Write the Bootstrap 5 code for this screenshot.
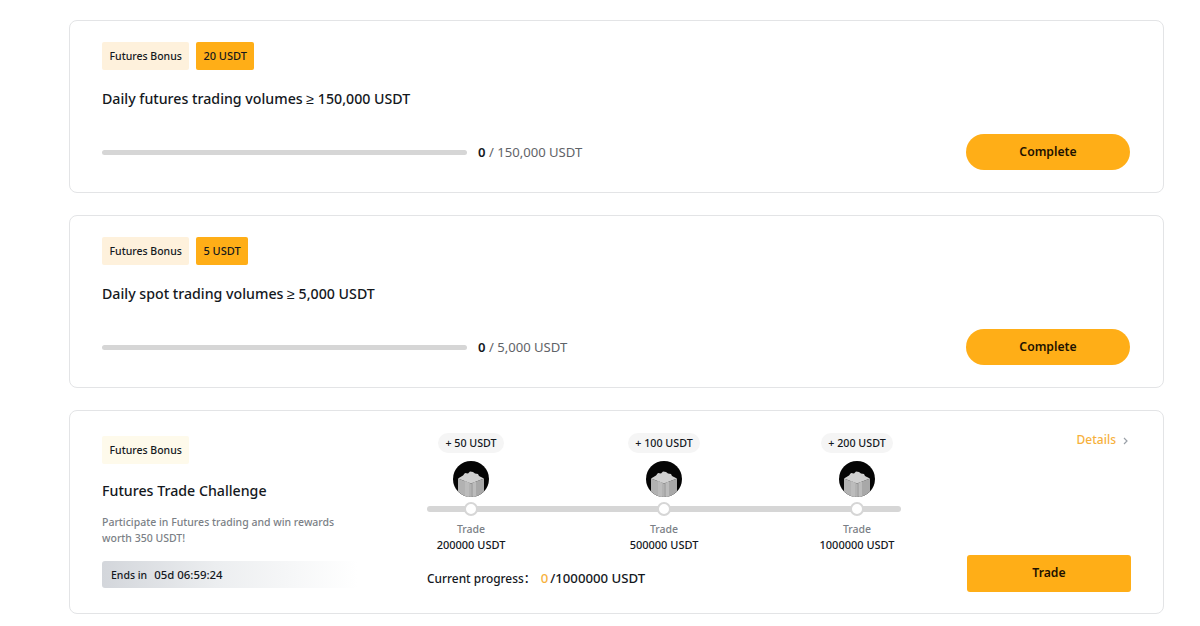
<!DOCTYPE html>
<html lang="en">
<head>
  <meta charset="UTF-8">
  <title>Futures Bonus Tasks</title>
  <link href="https://cdn.jsdelivr.net/npm/bootstrap@5.3.0/dist/css/bootstrap.min.css" rel="stylesheet">
  <style>
    html, body { height: 626px; overflow: hidden; }
    body {
      font-family: "Noto Sans", "Liberation Sans", sans-serif;
      background: #fff;
      color: #14181d;
      padding: 20px 36px 0 69px;
    }
    .task-card {
      height: 173px;
      margin-bottom: 22px;
      padding: 21px 33px 21px 32px;
      border: 1px solid #e3e4e6;
      border-radius: 8px;
    }
    .task-card.challenge { height: 204px; margin-bottom: 0; padding: 22px 32px 21px 32px; }
    .tags { column-gap: 7px; }
    .tag {
      height: 28px;
      padding: 0 7.5px;
      font-size: 10.5px;
      font-weight: 500;
      line-height: 28px;
      border-radius: 2px;
      color: #14181d;
    }
    .tag-light { background: #fef1dc; }
    .tag-pale { background: #fefaeb; }
    .tag-amount { background: #ffae17; font-size: 11px; padding: 0 7px; }
    .task-title { font-size: 14.2px; font-weight: 500; line-height: 20px; margin: 19px 0 0; }
    .bar { width: 365px; height: 5px; background: #d6d6d6; border-radius: 3px; }
    .amount { font-size: 13.1px; color: #5f6368; margin-left: 11px; line-height: 20px; }
    .amount b { color: #14181d; font-weight: 600; }
    .btn-pill, .btn-trade {
      width: 164px;
      font-size: 12.2px;
      font-weight: 600;
      background: #ffae17;
      color: #1e1200;
      border: 0;
      padding: 0;
    }
    .btn-pill { height: 36px; border-radius: 18px; }
    .btn-trade { height: 37px; border-radius: 3px; }
    .progress-row { margin-top: 25px; }
    .col-info { width: 256px; padding-top: 3px; }
    .col-info .task-title { margin-top: 17px; }
    .desc { font-size: 10.5px; font-weight: 500; line-height: 16px; color: #7b7f86; margin: 13px 0 0; }
    .ends {
      height: 27px;
      margin-top: 15px;
      padding-left: 9px;
      font-size: 10.5px;
      font-weight: 500;
      line-height: 27px;
      border-radius: 3px;
      background: linear-gradient(90deg, #d3d6db 0%, #eceef0 45%, #fff 100%);
    }
    .ends span { margin-left: 7px; font-size: 11.4px; }
    .col-steps { width: 474px; margin-left: 69px; }
    .steps { position: relative; }
    .track {
      position: absolute;
      left: 0;
      right: 0;
      top: 73px;
      height: 6px;
      background: #d6d6d6;
      border-radius: 3px;
    }
    .step { width: 88px; position: relative; text-align: center; line-height: 20px; }
    .reward {
      display: inline-block;
      vertical-align: top;
      height: 20px;
      padding: 0 7px;
      font-size: 10.7px;
      font-weight: 500;
      line-height: 20px;
      white-space: nowrap;
      background: #f5f5f5;
      border-radius: 10px;
    }
    .gift { display: block; width: 36px; height: 36px; margin: 8px auto 5px; }
    .knob {
      display: block;
      width: 14px;
      height: 14px;
      margin: 0 auto;
      background: #fff;
      border: 2px solid #d6d6d6;
      border-radius: 50%;
    }
    .step-label { font-size: 10.5px; font-weight: 500; line-height: 16px; margin-top: 5px; color: #7b7f86; }
    .step-goal { font-size: 11px; font-weight: 500; line-height: 16px; white-space: nowrap; }
    .current { font-size: 11.9px; font-weight: 500; line-height: 20px; margin-top: 15px; }
    .current i { font-style: normal; font-family: "Noto Sans CJK SC", sans-serif; }
    .current em { font-style: normal; font-size: 13.2px; color: #f7b13c; margin: 0 2px 0 5px; }
    .current span { font-size: 13.2px; }
    .col-action { width: 164px; margin-left: auto; }
    .details { font-size: 12px; font-weight: 500; color: #f7b13c; line-height: 16px; margin: -1px 3px 0 0; }
    .details svg { margin-left: 7px; }
  </style>
</head>
<body>

  <div class="card task-card">
    <div class="d-flex tags">
      <span class="tag tag-light">Futures Bonus</span>
      <span class="tag tag-amount">20 USDT</span>
    </div>
    <p class="task-title">Daily futures trading volumes ≥ 150,000 USDT</p>
    <div class="d-flex align-items-center justify-content-between progress-row">
      <div class="d-flex align-items-center">
        <div class="bar"></div>
        <div class="amount"><b>0</b> / 150,000 USDT</div>
      </div>
      <button class="btn btn-pill">Complete</button>
    </div>
  </div>

  <div class="card task-card">
    <div class="d-flex tags">
      <span class="tag tag-light">Futures Bonus</span>
      <span class="tag tag-amount">5 USDT</span>
    </div>
    <p class="task-title">Daily spot trading volumes ≥ 5,000 USDT</p>
    <div class="d-flex align-items-center justify-content-between progress-row">
      <div class="d-flex align-items-center">
        <div class="bar"></div>
        <div class="amount"><b>0</b> / 5,000 USDT</div>
      </div>
      <button class="btn btn-pill">Complete</button>
    </div>
  </div>

  <div class="card task-card challenge flex-row">
    <div class="col-info">
      <div class="d-flex"><span class="tag tag-pale">Futures Bonus</span></div>
      <p class="task-title">Futures Trade Challenge</p>
      <p class="desc">Participate in Futures trading and win rewards worth 350 USDT!</p>
      <div class="ends">Ends in<span>05d 06:59:24</span></div>
    </div>

    <div class="col-steps">
      <div class="steps d-flex justify-content-between">
        <div class="track"></div>
        <div class="step">
          <span class="reward">+ 50 USDT</span>
          <svg class="gift" viewBox="0 0 36 36"><use href="#gift"/></svg>
          <span class="knob"></span>
          <div class="step-label">Trade</div>
          <div class="step-goal">200000 USDT</div>
        </div>
        <div class="step">
          <span class="reward">+ 100 USDT</span>
          <svg class="gift" viewBox="0 0 36 36"><use href="#gift"/></svg>
          <span class="knob"></span>
          <div class="step-label">Trade</div>
          <div class="step-goal">500000 USDT</div>
        </div>
        <div class="step">
          <span class="reward">+ 200 USDT</span>
          <svg class="gift" viewBox="0 0 36 36"><use href="#gift"/></svg>
          <span class="knob"></span>
          <div class="step-label">Trade</div>
          <div class="step-goal">1000000 USDT</div>
        </div>
      </div>
      <div class="current">Current progress<i>：</i><em>0</em><span>/1000000 USDT</span></div>
    </div>

    <div class="col-action d-flex flex-column justify-content-between align-items-end">
      <div class="details">Details<svg width="5" height="8" viewBox="0 0 5 8"><path d="M1 1l3 3-3 3" fill="none" stroke="#9aa0a8" stroke-width="1.2"/></svg></div>
      <button class="btn btn-trade">Trade</button>
    </div>
  </div>

  <!-- shared gift icon -->
  <svg width="0" height="0" class="d-block">
    <defs>
      <clipPath id="giftClip"><circle cx="18" cy="18" r="18"/></clipPath>
      <symbol id="gift" viewBox="0 0 36 36">
        <circle cx="18" cy="18" r="18" fill="#050505"/>
        <g clip-path="url(#giftClip)">
          <path d="M5 17.500l13 5v13.500h-9l-4-4z" fill="#b2b2b2"/>
          <path d="M31 17.500l-13 5v13.500h9l4-4z" fill="#a8a8a8"/>
          <path d="M5 17.500l5-3 2-2.500 3 .5 2-2 3 .5 2 1.500 3 .5 1 2 5 2.500-13 5z" fill="#d0d0d0"/>
          <path d="M12 19.900V36h4V21.400zM23 20.600l-3 1.200V36h3z" fill="#bcbcbc"/>
        </g>
      </symbol>
    </defs>
  </svg>

  <script src="https://cdn.jsdelivr.net/npm/bootstrap@5.3.0/dist/js/bootstrap.bundle.min.js"></script>
</body>
</html>
